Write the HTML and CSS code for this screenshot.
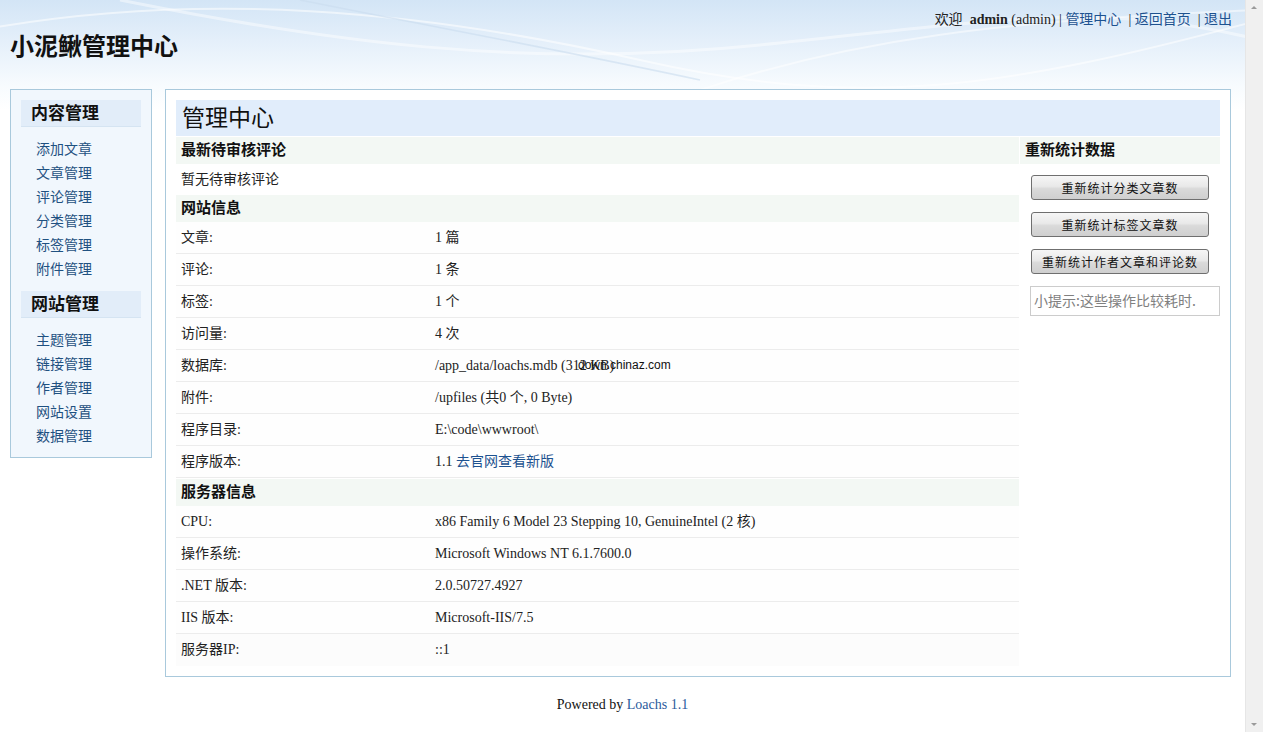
FILE: index.html
```html
<!DOCTYPE html>
<html lang="zh-CN">
<head>
<meta charset="utf-8">
<title>小泥鳅管理中心</title>
<link rel="stylesheet" href="styles.css">
</head>
<body>
<div class="page">
  <div class="viewport">
    <header class="top">
      <svg class="swoosh" width="1245" height="100" viewBox="0 0 1245 100" preserveAspectRatio="none" aria-hidden="true">
        <path d="M-20 30 C 200 -10, 420 10, 640 60 S 1000 90, 1260 20" stroke="#ffffff" stroke-opacity="0.55" stroke-width="2" fill="none"/>
        <path d="M120 0 C 320 40, 520 70, 760 45 S 1100 0, 1260 40" stroke="#ffffff" stroke-opacity="0.45" stroke-width="3" fill="none"/>
        <path d="M700 90 C 850 40, 1000 20, 1260 10" stroke="#ffffff" stroke-opacity="0.5" stroke-width="2" fill="none"/>
        <path d="M300 0 C 450 30, 560 50, 700 80" stroke="#c9dcef" stroke-opacity="0.6" stroke-width="1.5" fill="none"/>
      </svg>
      <h1 class="logo">小泥鳅管理中心</h1>
      <div class="userbar">欢迎&nbsp; <b>admin</b> (admin) | <a href="#">管理中心</a>&nbsp; | <a href="#">返回首页</a>&nbsp; | <a href="#">退出</a></div>
    </header>

    <div class="wrap">
      <aside class="side">
        <h3 class="side-title">内容管理</h3>
        <ul class="side-list">
          <li><a href="#">添加文章</a></li>
          <li><a href="#">文章管理</a></li>
          <li><a href="#">评论管理</a></li>
          <li><a href="#">分类管理</a></li>
          <li><a href="#">标签管理</a></li>
          <li><a href="#">附件管理</a></li>
        </ul>
        <h3 class="side-title">网站管理</h3>
        <ul class="side-list">
          <li><a href="#">主题管理</a></li>
          <li><a href="#">链接管理</a></li>
          <li><a href="#">作者管理</a></li>
          <li><a href="#">网站设置</a></li>
          <li><a href="#">数据管理</a></li>
        </ul>
      </aside>

      <main class="main">
        <h2 class="main-title">管理中心</h2>
        <div class="cols">
          <div class="left">
            <div class="sec">最新待审核评论</div>
            <div class="note">暂无待审核评论</div>
            <div class="sec">网站信息</div>
            <div class="info">
              <div class="row"><span class="k">文章:</span><span class="v">1 篇</span></div>
              <div class="row"><span class="k">评论:</span><span class="v">1 条</span></div>
              <div class="row"><span class="k">标签:</span><span class="v">1 个</span></div>
              <div class="row"><span class="k">访问量:</span><span class="v">4 次</span></div>
              <div class="row"><span class="k">数据库:</span><span class="v">/app_data/loachs.mdb (312 KB)<span class="wm">down.chinaz.com</span></span></div>
              <div class="row"><span class="k">附件:</span><span class="v">/upfiles (共0 个, 0 Byte)</span></div>
              <div class="row"><span class="k">程序目录:</span><span class="v">E:\code\wwwroot\</span></div>
              <div class="row"><span class="k">程序版本:</span><span class="v">1.1 <a href="#">去官网查看新版</a></span></div>
            </div>
            <div class="sec">服务器信息</div>
            <div class="info">
              <div class="row"><span class="k">CPU:</span><span class="v">x86 Family 6 Model 23 Stepping 10, GenuineIntel (2 核)</span></div>
              <div class="row"><span class="k">操作系统:</span><span class="v">Microsoft Windows NT 6.1.7600.0</span></div>
              <div class="row"><span class="k">.NET 版本:</span><span class="v">2.0.50727.4927</span></div>
              <div class="row"><span class="k">IIS 版本:</span><span class="v">Microsoft-IIS/7.5</span></div>
              <div class="row last"><span class="k">服务器IP:</span><span class="v">::1</span></div>
            </div>
          </div>
          <div class="right">
            <div class="sec">重新统计数据</div>
            <div class="btns">
              <button class="btn" type="button">重新统计分类文章数</button>
              <button class="btn" type="button">重新统计标签文章数</button>
              <button class="btn" type="button">重新统计作者文章和评论数</button>
            </div>
            <div class="tip">小提示:这些操作比较耗时.</div>
          </div>
        </div>
      </main>
    </div>

    <footer class="foot">Powered by <a href="#">Loachs 1.1</a></footer>
  </div>

  <div class="scrollbar" aria-hidden="true">
    <div class="arrow up"></div>
    <div class="track"></div>
    <div class="arrow down"></div>
  </div>
</div>
</body>
</html>
```

FILE: styles.css
```css
* { box-sizing: border-box; }

html, body {
  margin: 0;
  padding: 0;
  height: 100%;
  overflow: hidden;
}

body {
  font-family: "Liberation Serif", "Noto Sans CJK SC", serif;
  font-size: 14px;
  color: #222;
  background: #ffffff;
}

a { color: #1d5290; text-decoration: none; }

.page {
  display: flex;
  width: 1263px;
  height: 732px;
}

.viewport {
  width: 1245px;
  height: 732px;
  background: linear-gradient(to bottom, #d3e5f6 0px, #e4effa 40px, #f7fbfe 85px, #ffffff 110px);
}

/* header */
.top {
  position: relative;
  height: 89px;
  overflow: hidden;
}

.swoosh {
  position: absolute;
  left: 0;
  top: 0;
}

.logo {
  position: relative;
  margin: 0;
  padding: 31px 0 0 10px;
  font-family: "Noto Sans CJK SC", sans-serif;
  font-size: 24px;
  line-height: 28px;
  font-weight: bold;
  color: #111;
}

.userbar {
  position: absolute;
  right: 13px;
  top: 11px;
  font-size: 14px;
  line-height: 18px;
  color: #222;
}

/* layout */
.wrap {
  display: flex;
  align-items: flex-start;
  padding: 0 14px 0 10px;
  gap: 13px;
}

/* sidebar */
.side {
  width: 142px;
  flex: none;
  border: 1px solid #a9c9dc;
  background: #f1f7fd;
  padding: 10px 10px 9px 10px;
}

.side-title {
  margin: 0;
  height: 27px;
  padding-left: 10px;
  background: #e2edf9;
  border-bottom: 1px solid #d5e4f2;
  font-family: "Noto Sans CJK SC", sans-serif;
  font-size: 17px;
  line-height: 23px;
  font-weight: bold;
  color: #111;
}

.side-list {
  list-style: none;
  margin: 10px 0 10px 0;
  padding: 0 0 0 15px;
}
.side-list:last-child { margin-bottom: 0; }

.side-list li {
  height: 24px;
  line-height: 22px;
  font-family: "Noto Sans CJK SC", sans-serif;
  font-size: 14px;
}
.side-list a { color: #1f5181; }

/* main */
.main {
  width: 1066px;
  flex: none;
  border: 1px solid #a9c9dc;
  background: #ffffff;
  padding: 10px;
}

.main-title {
  margin: 0;
  height: 36px;
  padding-left: 6px;
  background: #e1edfb;
  font-family: "Noto Sans CJK SC", sans-serif;
  font-weight: normal;
  font-size: 23px;
  line-height: 32px;
  color: #111;
}

.cols {
  display: flex;
  gap: 1px;
}

.left { width: 843px; flex: none; }
.right { flex: 1; }

.sec {
  height: 27px;
  margin-top: 1px;
  padding-left: 5px;
  background: #f3f8f4;
  font-family: "Noto Sans CJK SC", sans-serif;
  font-size: 15px;
  font-weight: bold;
  line-height: 23px;
  color: #111;
}

.note {
  height: 30px;
  line-height: 28px;
  padding-left: 5px;
  font-family: "Noto Sans CJK SC", sans-serif;
  font-size: 14px;
}

.row {
  display: grid;
  grid-template-columns: 254px 1fr;
  height: 32px;
  line-height: 32px;
  border-bottom: 1px solid #ececec;
  background: #fefefe;
}
.row.last { border-bottom: none; background: #fcfcfc; }

.k, .v {
  padding-left: 5px;
  white-space: nowrap;
}
.v { position: relative; }

.wm {
  position: absolute;
  left: 148px;
  top: -1px;
  font-family: "Liberation Sans", sans-serif;
  font-size: 12px;
  color: #111;
}

/* right column */
.btns {
  display: flex;
  flex-direction: column;
  align-items: center;
  gap: 12px;
  padding-top: 11px;
}

.btn {
  width: 178px;
  height: 25px;
  padding: 0;
  border: 1px solid #6f6f6f;
  border-radius: 3px;
  background: linear-gradient(to bottom, #f6f6f6 0%, #e9e9e9 45%, #dadada 55%, #cfcfcf 100%);
  font-family: "Noto Sans CJK SC", sans-serif;
  font-size: 12px;
  letter-spacing: 1px;
  color: #111;
  line-height: 22px;
}

.tip {
  margin: 12px 0 0 10px;
  height: 30px;
  border: 1px solid #cccccc;
  padding-left: 3px;
  font-family: "Noto Sans CJK SC", sans-serif;
  font-size: 14px;
  line-height: 27px;
  color: #808080;
}

/* footer */
.foot {
  text-align: center;
  padding-top: 19px;
  font-size: 14px;
  line-height: 18px;
  color: #111;
}
.foot a { color: #2a5a9c; }

/* faux scrollbar */
.scrollbar {
  width: 18px;
  height: 732px;
  display: flex;
  flex-direction: column;
  background: #f0f0f0;
  border-left: 1px solid #e6e6e6;
}
.track { flex: 1; }
.arrow {
  height: 17px;
  position: relative;
}
.arrow::after {
  content: "";
  position: absolute;
  left: 5px;
  width: 0;
  height: 0;
  border-left: 3px solid transparent;
  border-right: 3px solid transparent;
}
.arrow.up::after { top: 6px; border-bottom: 3px solid #9a9a9a; }
.arrow.down::after { bottom: 6px; border-top: 3px solid #9a9a9a; }
```
